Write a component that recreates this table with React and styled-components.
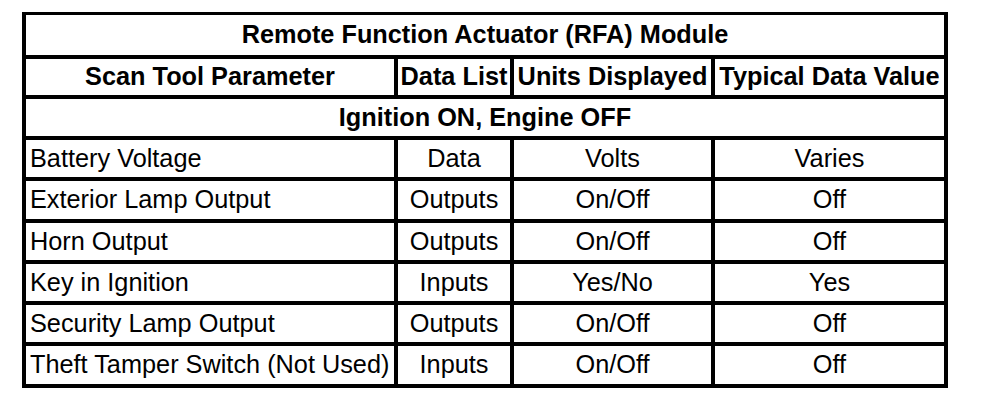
import React from 'react';
import styled, { createGlobalStyle } from 'styled-components';

const GlobalStyle = createGlobalStyle`
    html, body {
        margin: 0;
        padding: 0;
        background: #ffffff;
    }
    body {
        font-family: "Liberation Sans", Arial, sans-serif;
        color: #000000;
    }
`;

const Page = styled.div`
    padding: 12px 0 0 22px;
`;

const Table = styled.div`
    display: grid;
    width: 926px;
    box-sizing: border-box;
    padding: 3px 4px 4px 4px;
    gap: 4px;
    background: #000000;
    grid-template-columns: 368px 112px 197px 229px;
    grid-template-rows: 40px 36px 37px repeat(6, 37.3px);
`;

const Cell = styled.div`
    background: #ffffff;
    display: flex;
    align-items: center;
    justify-content: ${({ $left }) => ($left ? 'flex-start' : 'center')};
    padding: ${({ $left }) => ($left ? '0 0 0 4px' : '0')};
    grid-column: ${({ $span }) => ($span ? '1 / -1' : 'auto')};
    font-size: 25.3px;
    font-weight: ${({ $bold }) => ($bold ? 700 : 400)};
    line-height: 1;
    white-space: nowrap;
    overflow: hidden;
`;

const headers = ['Scan Tool Parameter', 'Data List', 'Units Displayed', 'Typical Data Value'];

const rows = [
    ['Battery Voltage', 'Data', 'Volts', 'Varies'],
    ['Exterior Lamp Output', 'Outputs', 'On/Off', 'Off'],
    ['Horn Output', 'Outputs', 'On/Off', 'Off'],
    ['Key in Ignition', 'Inputs', 'Yes/No', 'Yes'],
    ['Security Lamp Output', 'Outputs', 'On/Off', 'Off'],
    ['Theft Tamper Switch (Not Used)', 'Inputs', 'On/Off', 'Off'],
];

export default function App() {
    return (
        <Page>
            <GlobalStyle />
            <Table>
                <Cell $span $bold>Remote Function Actuator (RFA) Module</Cell>
                {headers.map((h) => (
                    <Cell key={h} $bold>{h}</Cell>
                ))}
                <Cell $span $bold>Ignition ON, Engine OFF</Cell>
                {rows.map((r) =>
                    r.map((v, i) => (
                        <Cell key={r[0] + i} $left={i === 0}>{v}</Cell>
                    ))
                )}
            </Table>
        </Page>
    );
}
